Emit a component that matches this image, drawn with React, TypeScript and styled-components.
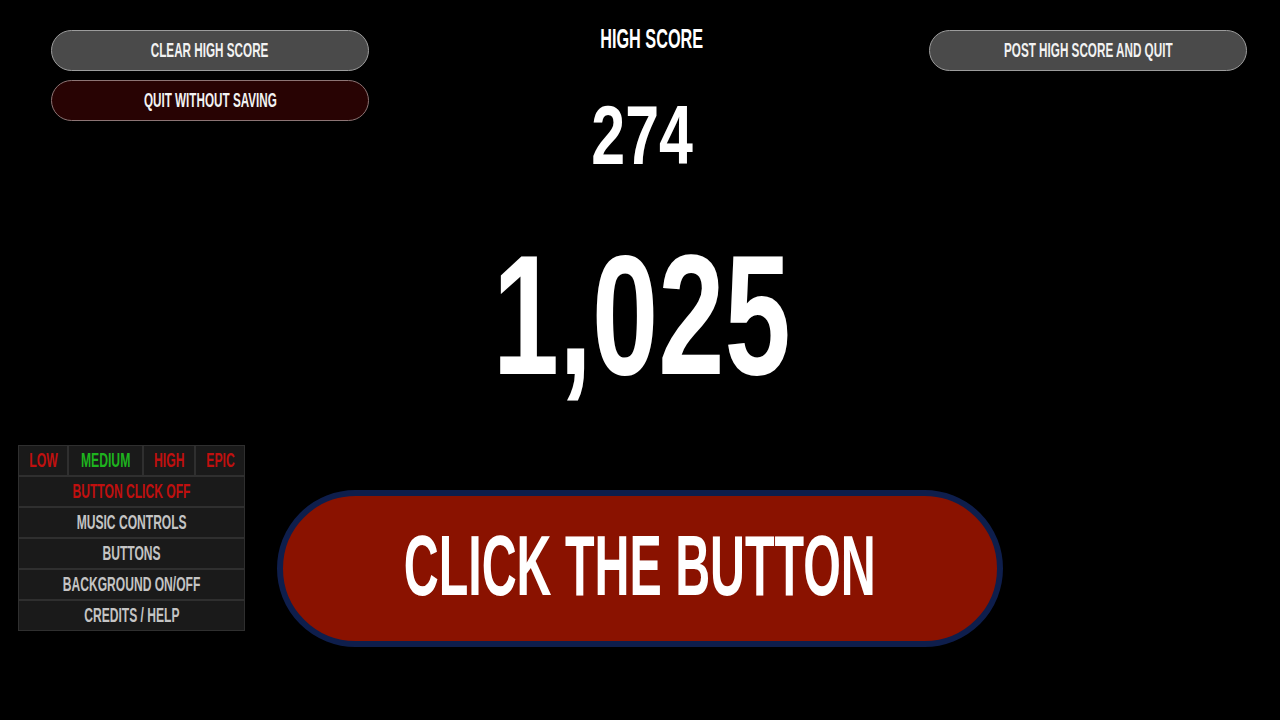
import React from "react";
import styled, { createGlobalStyle } from "styled-components";

const GlobalStyle = createGlobalStyle`
  html, body {
    margin: 0;
    padding: 0;
    background: #000;
  }
  body {
    font-family: "Liberation Sans", Arial, sans-serif;
    font-weight: 700;
  }
`;

const qualities = [
  { label: "LOW", active: false, width: 50 },
  { label: "MEDIUM", active: true, width: 75 },
  { label: "HIGH", active: false, width: 52 },
  { label: "EPIC", active: false, width: 50 },
];

const menuRows = [
  { label: "BUTTON CLICK OFF", tone: "red" },
  { label: "MUSIC CONTROLS", tone: "grey" },
  { label: "BUTTONS", tone: "grey" },
  { label: "BACKGROUND ON/OFF", tone: "grey" },
  { label: "CREDITS / HELP", tone: "grey" },
];

const App = () => {
  return (
    <Page>
      <GlobalStyle />
      <Header>
        <ButtonStack>
          <PillButton $variant="grey">
            <Squeeze $x={0.557}>CLEAR HIGH SCORE</Squeeze>
          </PillButton>
          <PillButton $variant="danger">
            <Squeeze $x={0.557}>QUIT WITHOUT SAVING</Squeeze>
          </PillButton>
        </ButtonStack>

        <ScoreColumn>
          <HighScoreTitle>
            <Squeeze $x={0.58}>HIGH SCORE</Squeeze>
          </HighScoreTitle>
          <HighScoreValue>
            <Squeeze $x={0.725}>274</Squeeze>
          </HighScoreValue>
          <CurrentScore>
            <Squeeze $x={0.7}>1,025</Squeeze>
          </CurrentScore>
        </ScoreColumn>

        <ButtonStack>
          <PillButton $variant="grey">
            <Squeeze $x={0.557}>POST HIGH SCORE AND QUIT</Squeeze>
          </PillButton>
        </ButtonStack>
      </Header>

      <Bottom>
        <SettingsPanel>
          <QualityRow>
            {qualities.map((q) => (
              <Cell key={q.label} $tone={q.active ? "green" : "red"} style={{ width: q.width }}>
                <Squeeze $x={0.58}>{q.label}</Squeeze>
              </Cell>
            ))}
          </QualityRow>
          {menuRows.map((row) => (
            <Cell key={row.label} $tone={row.tone}>
              <Squeeze $x={0.575}>{row.label}</Squeeze>
            </Cell>
          ))}
        </SettingsPanel>

        <BigButton>
          <Squeeze $x={0.569}>CLICK THE BUTTON</Squeeze>
        </BigButton>
      </Bottom>
    </Page>
  );
};

export default App;

const Page = styled.div`
  width: 1280px;
  height: 720px;
  background: #000;
  overflow: hidden;
  color: #fff;
`;

const Header = styled.div`
  box-sizing: border-box;
  height: 445px;
  padding: 25px 33px 0 51px;
  display: grid;
  grid-template-columns: 318px 1fr 318px;
  align-items: start;
`;

const ButtonStack = styled.div`
  display: flex;
  flex-direction: column;
  gap: 9px;
  padding-top: 5px;
`;

const PillButton = styled.div<{ $variant: "grey" | "danger" }>`
  box-sizing: border-box;
  height: 41px;
  border-radius: 21px;
  border: 1.5px solid ${(p) => (p.$variant === "grey" ? "#9c9c9c" : "#8c7474")};
  background: ${(p) => (p.$variant === "grey" ? "#4a4a4a" : "#280303")};
  color: #f2f2f2;
  font-size: 21px;
  line-height: 21px;
  padding-bottom: 3px;
  display: flex;
  align-items: center;
  justify-content: center;
  white-space: nowrap;
`;

const Squeeze = styled.span<{ $x: number }>`
  display: inline-block;
  transform: scaleX(${(p) => p.$x});
  transform-origin: center;
  white-space: nowrap;
`;

const ScoreColumn = styled.div`
  display: flex;
  flex-direction: column;
  align-items: center;
  color: #fff;
`;

const HighScoreTitle = styled.div`
  font-size: 28px;
  line-height: 28px;
  margin-left: 5px;
`;

const HighScoreValue = styled.div`
  margin-top: 40px;
  margin-right: 14px;
  font-size: 84px;
  line-height: 84px;
`;

const CurrentScore = styled.div`
  margin-top: 53px;
  margin-right: 14px;
  font-size: 170px;
  line-height: 170px;
`;

const Bottom = styled.div`
  display: flex;
  align-items: flex-start;
  padding-left: 18px;
  gap: 32px;
`;

const SettingsPanel = styled.div`
  width: 227px;
  display: flex;
  flex-direction: column;
`;

const QualityRow = styled.div`
  display: flex;
`;

const toneColor: Record<string, string> = {
  red: "#c0100f",
  green: "#1eb41e",
  grey: "#c4c4c4",
};

const Cell = styled.div<{ $tone: string }>`
  box-sizing: border-box;
  height: 31px;
  border: 1.5px solid #2f2f2f;
  background: #1a1a1a;
  color: ${(p) => toneColor[p.$tone]};
  font-size: 21px;
  line-height: 21px;
  padding-bottom: 3px;
  display: flex;
  align-items: center;
  justify-content: center;
  white-space: nowrap;
`;

const BigButton = styled.div`
  box-sizing: border-box;
  margin-top: 45px;
  width: 726px;
  height: 157px;
  border-radius: 79px;
  border: 6px solid #0e1e4c;
  background: #8a1200;
  color: #fff;
  font-size: 85px;
  line-height: 85px;
  display: flex;
  align-items: center;
  justify-content: center;
  padding-bottom: 6px;
  white-space: nowrap;
`;
